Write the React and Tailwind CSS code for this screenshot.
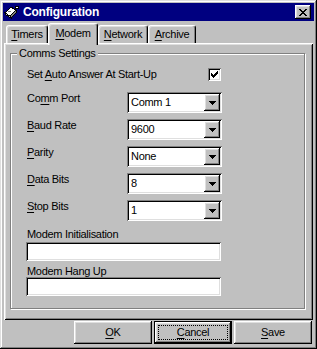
import React from "react";

const raised =
  "shadow-[inset_-1px_-1px_#000,inset_1px_1px_#fff,inset_-2px_-2px_#808080,inset_2px_2px_#dfdfdf]";
const sunken =
  "shadow-[inset_1px_1px_#808080,inset_-1px_-1px_#fff,inset_2px_2px_#000,inset_-2px_-2px_#dfdfdf]";

const U = ({ children }) => <span className="underline underline-offset-[2px]">{children}</span>;

const Arrow = () => (
  <svg width="7" height="4" viewBox="0 0 7 4" shapeRendering="crispEdges">
    <rect x="0" y="0" width="7" height="1" fill="#000" />
    <rect x="1" y="1" width="5" height="1" fill="#000" />
    <rect x="2" y="2" width="3" height="1" fill="#000" />
    <rect x="3" y="3" width="1" height="1" fill="#000" />
  </svg>
);

const Check = () => (
  <svg width="7" height="7" viewBox="0 0 7 7" shapeRendering="crispEdges" fill="#000">
    <rect x="6" y="0" width="1" height="1" />
    <rect x="5" y="1" width="2" height="1" />
    <rect x="0" y="2" width="1" height="1" />
    <rect x="4" y="2" width="3" height="1" />
    <rect x="0" y="3" width="2" height="1" />
    <rect x="3" y="3" width="3" height="1" />
    <rect x="0" y="4" width="5" height="1" />
    <rect x="1" y="5" width="3" height="1" />
    <rect x="2" y="6" width="1" height="1" />
  </svg>
);

const CloseGlyph = () => (
  <svg width="8" height="7" viewBox="0 0 8 7" shapeRendering="crispEdges" fill="#000">
    <rect x="0" y="0" width="2" height="1" />
    <rect x="6" y="0" width="2" height="1" />
    <rect x="1" y="1" width="2" height="1" />
    <rect x="5" y="1" width="2" height="1" />
    <rect x="2" y="2" width="4" height="1" />
    <rect x="3" y="3" width="2" height="1" />
    <rect x="2" y="4" width="4" height="1" />
    <rect x="1" y="5" width="2" height="1" />
    <rect x="5" y="5" width="2" height="1" />
    <rect x="0" y="6" width="2" height="1" />
    <rect x="6" y="6" width="2" height="1" />
  </svg>
);

const AppIcon = () => (
  <svg width="16" height="16" viewBox="0 0 16 16" shapeRendering="crispEdges">
    <path d="M1 9 L7 3 L12 6 L6 12 Z" fill="#fff" stroke="#000" strokeWidth="1" />
    <path d="M6 12 L12 6 L13 8 L7 14 Z" fill="#808080" stroke="#000" strokeWidth="1" />
    <path d="M1 9 L6 12 L7 14 L2 11 Z" fill="#c0c0c0" stroke="#000" strokeWidth="1" />
    <rect x="8" y="4" width="2" height="1" fill="#000" />
    <rect x="4" y="7" width="3" height="1" fill="#808080" />
    <rect x="11" y="2" width="3" height="2" fill="#fff" stroke="#000" strokeWidth="1" />
  </svg>
);

const Tab = ({ label, first, selected, w }) => (
  <div
    className={`${w} flex items-center justify-center border-t border-l border-r border-t-white border-l-white border-r-black rounded-t-[3px] shadow-[inset_-1px_0_#808080,inset_1px_1px_#dfdfdf] bg-[#c0c0c0] ${
      selected ? "h-[22px] -mb-[2px] relative z-10 pb-[3px]" : "h-[18px]"
    }`}
  >
    <span>
      <U>{first}</U>
      {label}
    </span>
  </div>
);

const Combo = ({ label, first, rest, value }) => (
  <div className="flex items-start h-[21px]">
    <span className="w-[100px] leading-[13px]">
      {first ? <U>{first}</U> : null}
      {rest}
    </span>
    <div className={`w-[95px] h-[21px] bg-white flex p-[2px] ${sunken}`}>
      <span className="flex-1 pl-[2px] flex items-center leading-[13px]">{value}</span>
      <div className={`w-[16px] bg-[#c0c0c0] flex items-center justify-center ${raised}`}>
        <Arrow />
      </div>
    </div>
  </div>
);

const Button = ({ first, rest, isDefault }) => (
  <div
    className={`w-[78px] h-[23px] bg-[#c0c0c0] flex ${raised} ${
      isDefault ? "border border-black p-[3px]" : "p-[4px]"
    }`}
  >
    <div
      className={`flex-1 flex items-center justify-center leading-[13px] ${
        isDefault ? "border border-dotted border-black" : ""
      }`}
    >
      <span>
        <U>{first}</U>
        {rest}
      </span>
    </div>
  </div>
);

export default function App() {
  return (
    <div className="w-[317px] h-[349px] bg-[#c0c0c0] p-[3px] flex flex-col text-[11px] tracking-[-0.3px] text-black font-['Liberation_Sans',Arial,sans-serif] shadow-[inset_-1px_-1px_#000,inset_1px_1px_#dfdfdf,inset_-2px_-2px_#808080,inset_2px_2px_#fff]">
      {/* title bar */}
      <div className="h-[18px] bg-[#000080] flex items-center pl-[1px] pr-[3px]">
        <AppIcon />
        <span className="ml-[3px] text-white font-bold text-[12px] tracking-[-0.2px]">
          Configuration
        </span>
        <div className={`ml-auto w-[16px] h-[14px] bg-[#c0c0c0] flex items-center justify-center ${raised}`}>
          <CloseGlyph />
        </div>
      </div>

      {/* tabs */}
      <div className="mx-[1px] mt-[2px]">
        <div className="h-[20px] flex items-end pl-[2px]">
          <Tab w="w-[42px]" first="T" label="imers" />
          <Tab w="w-[50px]" first="M" label="odem" selected />
          <Tab w="w-[50px]" first="N" label="etwork" />
          <Tab w="w-[48px]" first="A" label="rchive" />
        </div>
        <div className="h-[277px] shadow-[inset_1px_1px_#fff,inset_-1px_-1px_#000,inset_2px_2px_#dfdfdf,inset_-2px_-2px_#808080] pt-[10px] pl-[6px]">
          <div className="relative w-[295px] h-[256px] border border-[#808080] shadow-[inset_1px_1px_#fff,1px_1px_#fff] pl-[16px] pt-[14px]">
            <span className="absolute -top-[7px] left-[6px] px-[2px] bg-[#c0c0c0] leading-[13px]">
              Comms Settings
            </span>
            <div className="w-[195px] flex flex-col">
              <div className="flex items-start justify-between h-[13px]">
                <span className="leading-[13px]">
                  Set <U>A</U>uto Answer At Start-Up
                </span>
                <div className={`w-[13px] h-[13px] mr-[1px] bg-white flex items-center justify-center ${sunken}`}>
                  <Check />
                </div>
              </div>
              <div className="mt-[11px] flex flex-col gap-[6px]">
                <Combo first="" rest={<>Co<U>m</U>m Port</>} value="Comm 1" />
                <Combo first="B" rest="aud Rate" value="9600" />
                <Combo first="P" rest="arity" value="None" />
                <Combo first="D" rest="ata Bits" value="8" />
                <Combo first="S" rest="top Bits" value="1" />
              </div>
              <span className="mt-[7px] leading-[13px]">Modem Initialisation</span>
              <div className={`mt-[1px] -ml-[1px] w-[195px] h-[19px] bg-white ${sunken}`} />
              <span className="mt-[4px] leading-[12px]">Modem Hang Up</span>
              <div className={`-ml-[1px] w-[195px] h-[19px] bg-white ${sunken}`} />
            </div>
          </div>
        </div>
      </div>

      {/* buttons */}
      <div className="mt-[1px] flex justify-end gap-[2px] mr-[2px]">
        <Button first="O" rest="K" />
        <Button first="C" rest="ancel" isDefault />
        <Button first="S" rest="ave" />
      </div>
    </div>
  );
}
